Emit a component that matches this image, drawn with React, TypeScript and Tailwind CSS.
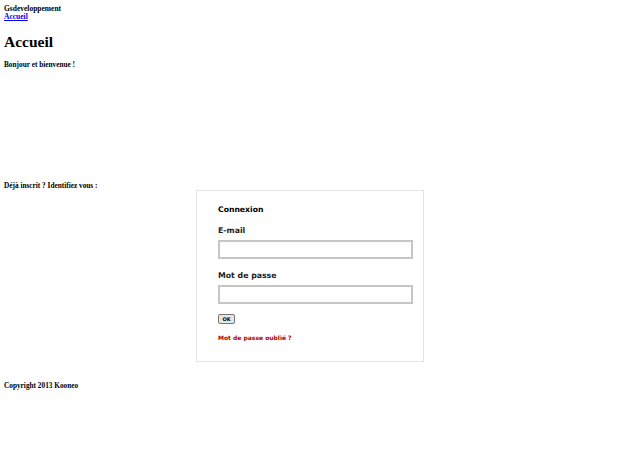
import React from "react";

export default function App() {
  const serif = { fontFamily: '"Liberation Serif", "Times New Roman", serif' };
  const sans = { fontFamily: '"DejaVu Sans", Verdana, sans-serif' };
  return (
    <div className="w-[620px] h-[466px] bg-white text-black overflow-hidden px-[4px]" style={serif}>
      <div className="pt-[5px] text-[7.5px] leading-[8px] font-bold">Gsdeveloppement</div>
      <div className="text-[7.5px] leading-[8px] font-bold">
        <a href="#" className="text-[#0000ee] underline">Accueil</a>
      </div>
      <h1 className="mt-[12px] text-[15.5px] leading-[18px] font-bold">Accueil</h1>
      <div className="mt-[10px] text-[7.3px] leading-[8px] font-bold">Bonjour et bienvenue !</div>
      <div className="mt-[113px] text-[7.3px] leading-[8px] font-bold">Déjà inscrit ? Identifiez vous :</div>
      <div className="flex justify-center">
        <div className="w-[228px] h-[172px] border border-[#e4e4e4] bg-white pl-[21px] pr-[10px] pt-[14px]" style={sans}>
          <div className="text-[7.7px] leading-[9px] font-bold text-black">Connexion</div>
          <div className="mt-[12px] text-[7.8px] leading-[9px] font-bold text-[#222]">E-mail</div>
          <div className="mt-[5px] w-[195px] h-[19px] border-2 border-[#c6c6c6] bg-white"></div>
          <div className="mt-[12px] text-[7.8px] leading-[9px] font-bold text-[#222]">Mot de passe</div>
          <div className="mt-[5px] w-[195px] h-[19px] border-2 border-[#c6c6c6] bg-white"></div>
          <div className="mt-[10px] w-[17px] h-[10px] border border-[#777] rounded-[2px] bg-[#e6e6e6] flex items-center justify-center text-[5px] leading-[5px] font-bold">OK</div>
          <div className="mt-[10px] text-[6px] leading-[8px] font-bold text-[#b00000]">Mot de passe oublié ?</div>
        </div>
      </div>
      <div className="mt-[20px] text-[7.3px] leading-[8px] font-bold">Copyright 2013 Kooneo</div>
    </div>
  );
}
